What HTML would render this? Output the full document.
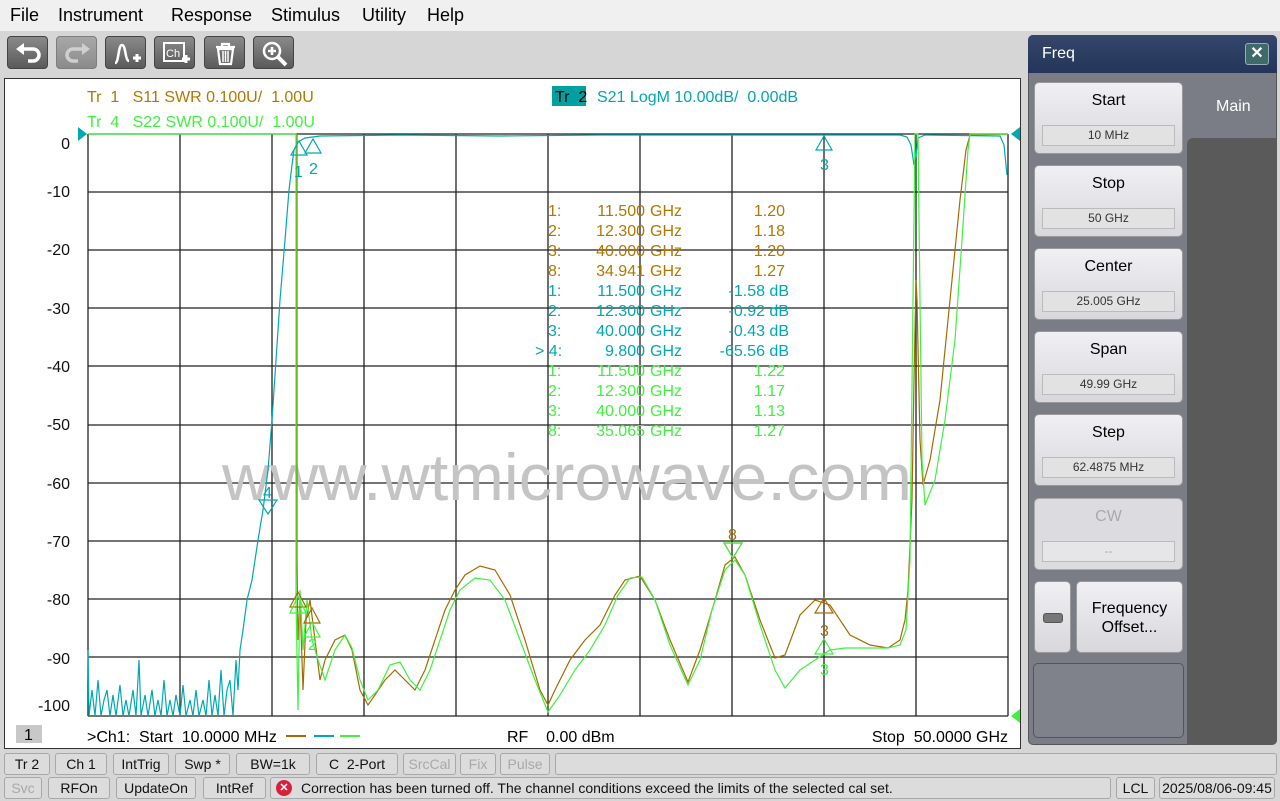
<!DOCTYPE html>
<html><head><meta charset="utf-8"><style>
*{margin:0;padding:0;box-sizing:border-box}
body{width:1280px;height:801px;background:#d6d6d6;font-family:"Liberation Sans",sans-serif;position:relative;overflow:hidden}
svg text{white-space:pre}
.abs{position:absolute}
#menu{left:0;top:0;width:1280px;height:31px;background:#f0f0f0;font-size:18px;color:#000}
#menu span{position:absolute;top:5px}
.tb{position:absolute;top:36px;width:41px;height:33px;border-radius:4px;background:linear-gradient(#8a8a8a,#5a5a5a);border:1px solid #444}
.sb{position:absolute;height:22px;border:1px solid #a8a8a8;border-radius:3px;background:#dcdcdc;font-size:14px;text-align:center;line-height:20px;color:#111}
.dis{color:#a8a8a8}
.pb{position:absolute;left:1034px;width:149px;height:72px;border-radius:5px;background:linear-gradient(#f0f0f4,#d8d8dc);border:1px solid #999;text-align:center;font-size:16px;color:#000}
.pb .t{margin-top:9px}
.pb .v{position:absolute;left:7px;right:7px;top:42px;height:21px;border:1px solid #bbb;background:#e2e2e2;font-size:12px;line-height:19px;color:#333}
</style></head><body>
<div id="menu" class="abs"><span style="left:10px">File</span><span style="left:58px">Instrument</span><span style="left:171px">Response</span><span style="left:271px">Stimulus</span><span style="left:362px">Utility</span><span style="left:427px">Help</span></div>

<div class="tb" style="left:7px"><svg width="41" height="33"><path d="M14 12 h11 a6 6 0 0 1 0 12 h-5" stroke="#fff" stroke-width="3.5" fill="none"/><path d="M8 12 l8-6 v12z" fill="#fff"/></svg></div>
<div class="tb" style="left:56px;opacity:.6"><svg width="41" height="33"><path d="M27 12 h-11 a6 6 0 0 0 0 12 h5" stroke="#ccc" stroke-width="3.5" fill="none"/><path d="M33 12 l-8-6 v12z" fill="#ccc"/></svg></div>
<div class="tb" style="left:105px"><svg width="41" height="33"><path d="M9 26 c4 0 3-18 7-18 s3 16 7 16" stroke="#fff" stroke-width="2.5" fill="none"/><path d="M27 21 h8 M31 17 v8" stroke="#fff" stroke-width="3"/></svg></div>
<div class="tb" style="left:154px"><svg width="41" height="33"><rect x="9" y="6" width="20" height="18" stroke="#fff" stroke-width="2" fill="none"/><text x="11" y="20" font-size="11" fill="#fff" font-family="Liberation Sans">Ch</text><path d="M27 22 h8 M31 18 v8" stroke="#fff" stroke-width="3"/></svg></div>
<div class="tb" style="left:204px"><svg width="41" height="33"><path d="M11 10 h19 M17 10 v-3 h7 v3 M13 12 l2 15 h11 l2-15z" stroke="#fff" stroke-width="2.2" fill="none"/><path d="M18 14 v11 M20.5 14 v11 M23 14 v11" stroke="#fff" stroke-width="1.5"/></svg></div>
<div class="tb" style="left:253px"><svg width="41" height="33"><circle cx="18" cy="14" r="8" stroke="#fff" stroke-width="2.5" fill="none"/><path d="M14 14 h8 M18 10 v8" stroke="#fff" stroke-width="2.5"/><path d="M24 20 l8 8" stroke="#fff" stroke-width="4"/></svg></div>

<div class="abs" style="left:4px;top:78px;width:1017px;height:671px;background:#fff;border:1px solid #333"></div>
<svg class="abs" style="left:0;top:0" width="1280" height="801" font-family="Liberation Sans,sans-serif">
<g stroke="#222" stroke-width="1.3">
<path d="M88 134V716M180 134V716M272 134V716M364 134V716M456 134V716M548 134V716M640 134V716M732 134V716M824 134V716M916 134V716M1008 134V716"/>
<path d="M88 134H1008M88 192H1008M88 250H1008M88 308H1008M88 366H1008M88 425H1008M88 483H1008M88 541H1008M88 599H1008M88 657H1008M88 716H1008"/>
</g>
<g font-size="16" fill="#111" text-anchor="end">
<text x="70" y="149">0</text><text x="70" y="197">-10</text><text x="70" y="255">-20</text><text x="70" y="314">-30</text><text x="70" y="372">-40</text><text x="70" y="430">-50</text><text x="70" y="489">-60</text><text x="70" y="547">-70</text><text x="70" y="605">-80</text><text x="70" y="664">-90</text><text x="70" y="711">-100</text>
</g>
<text x="222" y="500" font-size="66" fill="#c4c4c4" textLength="690" lengthAdjust="spacingAndGlyphs">www.wtmicrowave.com</text>
<g font-size="16">
<text x="87" y="102" fill="#b07800">Tr  1   S11 SWR 0.100U/  1.00U</text>
<text x="87" y="127" fill="#40f040">Tr  4   S22 SWR 0.100U/  1.00U</text>
<rect x="552" y="86" width="34" height="20" fill="#00a0a0"/>
<text x="555" y="102" fill="#000">Tr  2</text>
<text x="597" y="102" fill="#00a8b0">S21 LogM 10.00dB/  0.00dB</text>
</g>
<g fill="none" stroke-width="1.2">
<polyline stroke="#00a8b0" points="88,650 89,716 92,690 95,716 98,680 101,716 104,700 107,690 110,716 113,695 116,716 120,685 123,716 126,700 129,716 133,690 136,716 139,660 141,716 145,695 148,716 152,690 155,716 158,700 161,716 164,680 167,716 170,700 173,716 176,695 180,716 183,685 186,716 190,700 193,716 196,690 199,716 203,700 206,716 209,680 212,716 215,695 218,716 221,670 224,716 227,690 230,680 233,716 236,660 238,690 240,650 243,630 247,600 252,580 258,540 263,510 268,470 272,420 276,360 280,300 285,240 289,190 292,165 294,150 298,142 305,138 320,136 400,135 500,136 600,135 700,135 800,135 900,135 907,137 911,145 914,165 916,155 918,138 925,135 1000,136 1004,145 1007,175"/>
<polyline stroke="#a86a00" points="297,134 297,560 298,640 300,600 303,690 306,620 310,600 315,640 320,680 325,660 335,640 345,635 352,650 360,690 368,705 375,695 385,680 395,670 405,680 415,690 425,670 435,640 445,610 455,590 465,575 480,566 495,570 510,595 525,640 540,690 548,705 555,690 570,660 585,640 600,625 615,595 625,580 640,576 655,600 670,640 688,682 700,650 715,600 725,565 735,557 745,575 760,620 775,658 785,655 800,615 815,600 830,605 840,620 850,635 870,645 888,648 900,640 905,620 908,590 912,500 914,380 916,280 917,300 920,440 923,485 930,460 940,400 950,300 960,200 966,150 970,135 1008,134"/>
<polyline stroke="#40f040" points="88,134 296,134 296,600 298,710 300,590 303,650 307,600 312,640 318,660 325,680 335,650 345,635 352,648 360,680 368,700 378,690 390,665 400,662 410,680 420,690 430,670 440,640 450,610 460,590 475,578 490,580 505,600 520,640 535,680 548,712 560,695 575,670 590,650 605,625 618,595 630,578 642,577 655,600 670,645 688,685 700,660 712,610 725,570 735,560 745,575 760,625 775,670 785,688 800,670 815,660 830,650 845,648 865,648 888,648 900,645 906,630 910,560 913,300 915,134 918,134 920,300 922,460 925,505 935,480 945,420 955,340 962,240 968,150 970,134 1008,134"/>
</g>
<g fill="none" stroke-width="1.2">
<path d="M291 155l8-14 8 14z M305 153l8-14 8 14z M816 150l8-14 8 14z" stroke="#00a8b0"/>
<path d="M259 500h18l-9 14z" stroke="#00a8b0"/>
<path d="M724 543h18l-9 15z" stroke="#a86a00"/><path d="M724 543h18l-9 15z" stroke="#40f040"/>
<path d="M815 613l9-15 9 15z M290 607l8-15 8 15z M304 623l8-15 8 15z" stroke="#a86a00"/>
<path d="M815 654l9-15 9 15z M290 613l8-17 8 17z M304 637l8-15 8 15z" stroke="#40f040"/>
</g>
<g font-size="16">
<text x="294" y="177" fill="#00a8b0">1</text><text x="309" y="174" fill="#00a8b0">2</text><text x="820" y="170" fill="#00a8b0">3</text><text x="263" y="498" fill="#00a8b0">4</text>
<text x="728" y="540" fill="#a86a00">8</text><text x="820" y="636" fill="#a86a00">3</text><text x="820" y="675" fill="#40f040">3</text><text x="308" y="650" fill="#40f040">2</text>
</g>
<g font-size="16">
<g fill="#b07800"><text x="548" y="216">1:</text><text x="645" y="216" text-anchor="end">11.500</text><text x="650" y="216">GHz</text><text x="785" y="216" text-anchor="end">1.20</text>
<text x="548" y="236">2:</text><text x="645" y="236" text-anchor="end">12.300</text><text x="650" y="236">GHz</text><text x="785" y="236" text-anchor="end">1.18</text>
<text x="548" y="256">3:</text><text x="645" y="256" text-anchor="end">40.000</text><text x="650" y="256">GHz</text><text x="785" y="256" text-anchor="end">1.20</text>
<text x="548" y="276">8:</text><text x="645" y="276" text-anchor="end">34.941</text><text x="650" y="276">GHz</text><text x="785" y="276" text-anchor="end">1.27</text></g>
<g fill="#00a8b0"><text x="548" y="296">1:</text><text x="645" y="296" text-anchor="end">11.500</text><text x="650" y="296">GHz</text><text x="789" y="296" text-anchor="end">-1.58 dB</text>
<text x="548" y="316">2:</text><text x="645" y="316" text-anchor="end">12.300</text><text x="650" y="316">GHz</text><text x="789" y="316" text-anchor="end">-0.92 dB</text>
<text x="548" y="336">3:</text><text x="645" y="336" text-anchor="end">40.000</text><text x="650" y="336">GHz</text><text x="789" y="336" text-anchor="end">-0.43 dB</text>
<text x="535" y="356">&gt; 4:</text><text x="645" y="356" text-anchor="end">9.800</text><text x="650" y="356">GHz</text><text x="789" y="356" text-anchor="end">-65.56 dB</text></g>
<g fill="#40f040"><text x="548" y="376">1:</text><text x="645" y="376" text-anchor="end">11.500</text><text x="650" y="376">GHz</text><text x="785" y="376" text-anchor="end">1.22</text>
<text x="548" y="396">2:</text><text x="645" y="396" text-anchor="end">12.300</text><text x="650" y="396">GHz</text><text x="785" y="396" text-anchor="end">1.17</text>
<text x="548" y="416">3:</text><text x="645" y="416" text-anchor="end">40.000</text><text x="650" y="416">GHz</text><text x="785" y="416" text-anchor="end">1.13</text>
<text x="548" y="436">8:</text><text x="645" y="436" text-anchor="end">35.065</text><text x="650" y="436">GHz</text><text x="785" y="436" text-anchor="end">1.27</text></g>
</g>
<path d="M78 127l9 7-9 7z" fill="#00a8b0"/><path d="M1020 127l-9 7 9 7z" fill="#00a8b0"/><path d="M1020 709l-9 7 9 7z" fill="#40f040"/>
<rect x="16" y="725" width="26" height="18" fill="#c8c8c8"/><text x="24" y="740" font-size="16">1</text>
<text x="87" y="742" font-size="16" fill="#000">&gt;Ch1:  Start  10.0000 MHz</text>
<path d="M286 736h20" stroke="#a86a00" stroke-width="2"/><path d="M314 736h20" stroke="#00a8b0" stroke-width="2"/><path d="M340 736h20" stroke="#40f040" stroke-width="2"/>
<text x="507" y="742" font-size="16">RF    0.00 dBm</text>
<text x="1008" y="742" font-size="16" text-anchor="end">Stop  50.0000 GHz</text>
</svg>

<div class="abs" style="left:1028px;top:35px;width:249px;height:710px;background:#7b7d86;border-radius:5px;border:1px solid #555"></div>
<div class="abs" style="left:1028px;top:35px;width:249px;height:38px;background:linear-gradient(#34466a,#24355a);border-radius:5px 5px 0 0"></div>
<div class="abs" style="left:1042px;top:45px;color:#fff;font-size:16px">Freq</div>
<div class="abs" style="left:1245px;top:43px;width:24px;height:22px;border:1px solid #9ab;border-radius:3px;background:#3e6a6a;color:#fff;font-size:16px;text-align:center;line-height:20px;font-weight:bold">✕</div>
<div class="abs" style="left:1216px;top:98px;color:#fff;font-size:16px">Main</div>
<div class="abs" style="left:1187px;top:138px;width:90px;height:607px;background:#5a5a5a;border-radius:6px 0 5px 0"></div>
<div class="pb" style="top:82px"><div class="t">Start</div><div class="v">10 MHz</div></div>
<div class="pb" style="top:165px"><div class="t">Stop</div><div class="v">50 GHz</div></div>
<div class="pb" style="top:248px"><div class="t">Center</div><div class="v">25.005 GHz</div></div>
<div class="pb" style="top:331px"><div class="t">Span</div><div class="v">49.99 GHz</div></div>
<div class="pb" style="top:414px"><div class="t">Step</div><div class="v">62.4875 MHz</div></div>
<div class="pb" style="top:498px;background:#dcdce0;color:#aaa;border-color:#aaa"><div class="t">CW</div><div class="v" style="color:#aaa;background:#e6e6e8">--</div></div>
<div class="pb" style="top:581px;width:37px"><div style="position:absolute;left:8px;top:31px;width:20px;height:10px;border-radius:3px;background:#777;border:1px solid #555"></div></div>
<div class="pb" style="top:581px;left:1076px;width:107px"><div style="margin-top:17px;line-height:19px">Frequency<br>Offset...</div></div>
<div class="abs" style="left:1033px;top:663px;width:151px;height:75px;border-radius:5px;background:#80828b;border:1px solid #555"></div>

<div class="sb" style="left:4px;top:753px;width:46px">Tr 2</div>
<div class="sb" style="left:55px;top:753px;width:52px">Ch 1</div>
<div class="sb" style="left:113px;top:753px;width:56px">IntTrig</div>
<div class="sb" style="left:175px;top:753px;width:55px">Swp *</div>
<div class="sb" style="left:236px;top:753px;width:74px">BW=1k</div>
<div class="sb" style="left:316px;top:753px;width:82px;white-space:pre">C  2-Port</div>
<div class="sb dis" style="left:403px;top:753px;width:53px">SrcCal</div>
<div class="sb dis" style="left:460px;top:753px;width:36px">Fix</div>
<div class="sb dis" style="left:500px;top:753px;width:50px">Pulse</div>
<div class="sb" style="left:555px;top:753px;width:722px"></div>
<div class="sb dis" style="left:4px;top:777px;width:38px">Svc</div>
<div class="sb" style="left:48px;top:777px;width:62px">RFOn</div>
<div class="sb" style="left:116px;top:777px;width:80px">UpdateOn</div>
<div class="sb" style="left:203px;top:777px;width:63px">IntRef</div>
<div class="sb" style="left:270px;top:777px;width:841px;text-align:left;padding-left:30px">Correction has been turned off. The channel conditions exceed the limits of the selected cal set.</div>
<div class="abs" style="left:276px;top:780px;width:16px;height:16px;border-radius:50%;background:#d8203a;color:#fff;font-size:11px;font-weight:bold;text-align:center;line-height:16px">✕</div>
<div class="sb" style="left:1116px;top:777px;width:39px">LCL</div>
<div class="sb" style="left:1159px;top:777px;width:116px">2025/08/06-09:45</div>
</body></html>
